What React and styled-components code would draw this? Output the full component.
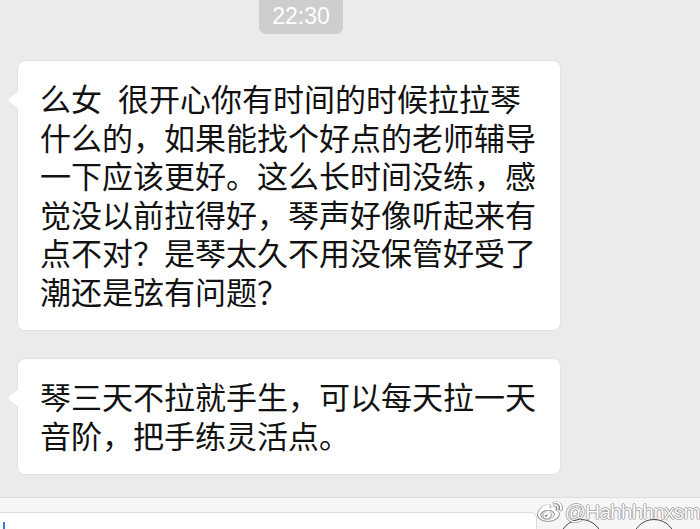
import styled, { createGlobalStyle } from "styled-components"
import { FaWeibo } from "react-icons/fa"

const Global = createGlobalStyle`
    html, body {
        margin: 0;
        padding: 0;
        height: 529px;
        overflow: hidden;
        background: #ebebeb;
    }
    #root {
        height: 529px;
    }
`

const Screen = styled.div`
    position: relative;
    display: flex;
    flex-direction: column;
    height: 529px;
    width: 700px;
    background: #ebebeb;
    font-family: "Noto Sans CJK SC", "Noto Sans", sans-serif;
    overflow: hidden;
`
const Stamp = styled.div`
    align-self: flex-start;
    margin-left: 259px;
    width: 84px;
    height: 34px;
    border-radius: 0 0 7px 7px;
    background: #cecece;
    color: #ffffff;
    font-family: "Liberation Sans", Arial, sans-serif;
    font-size: 23px;
    line-height: 32px;
    text-align: center;
`
const Messages = styled.div`
    display: flex;
    flex-direction: column;
    gap: 29px;
    padding: 27px 0 0 18px;
    flex: 1;
`
const Bubble = styled.div`
    position: relative;
    width: 542px;
    box-sizing: border-box;
    padding: 18px 22px 20px;
    background: #ffffff;
    border-radius: 7px;
    box-shadow: 0 0 0 0.5px rgba(0, 0, 0, 0.07);
    color: #121212;
    font-size: 31px;
    line-height: 38.5px;
    &::before {
        content: "";
        position: absolute;
        left: -10px;
        top: 30px;
        width: 11px;
        height: 18px;
        background: #ffffff;
        clip-path: polygon(100% 0, 5% 45%, 5% 55%, 100% 100%);
    }
`
const Line = styled.div`
    white-space: nowrap;
`
const Gap = styled.span`
    display: inline-block;
    width: ${({ w }) => w}px;
`
const Bar = styled.div`
    display: flex;
    align-items: flex-start;
    gap: 22px;
    height: 32px;
    border-top: 1px solid #dedede;
    background: #f6f6f7;
    padding-top: 14px;
    box-sizing: border-box;
`
const Input = styled.div`
    position: relative;
    margin-left: -12px;
    width: 547px;
    height: 40px;
    background: #ffffff;
    border: 1px solid #dcdcdc;
    border-radius: 6px;
`
const Caret = styled.div`
    position: absolute;
    left: 14px;
    top: 9px;
    width: 2px;
    height: 22px;
    background: #3f73e8;
`
const Buttons = styled.div`
    display: flex;
    gap: 29px;
    margin-top: 7px;
`
const Round = styled.div`
    width: 42px;
    height: 42px;
    border-radius: 50%;
    border: 1.6px solid #4a4a4a;
`
const Mark = styled.div`
    position: absolute;
    right: 0;
    top: 500px;
    display: flex;
    align-items: center;
    gap: 3px;
    color: #ffffff;
    font-family: "Liberation Sans", Arial, sans-serif;
    font-size: 20.5px;
    letter-spacing: -0.6px;
    text-shadow: 1px 0 0 rgba(0, 0, 0, 0.28), -1px 0 0 rgba(0, 0, 0, 0.28),
        0 1px 0 rgba(0, 0, 0, 0.28), 0 -1px 0 rgba(0, 0, 0, 0.28);
    svg {
        filter: drop-shadow(1px 0 0 rgba(0, 0, 0, 0.3)) drop-shadow(-1px 0 0 rgba(0, 0, 0, 0.3))
            drop-shadow(0 1px 0 rgba(0, 0, 0, 0.3));
    }
`

const first = [
    "什么的，如果能找个好点的老师辅导",
    "一下应该更好。这么长时间没练，感",
    "觉没以前拉得好，琴声好像听起来有",
    "点不对？是琴太久不用没保管好受了",
    "潮还是弦有问题？",
]
const second = [
    "琴三天不拉就手生，可以每天拉一天",
    "音阶，把手练灵活点。",
]

const App = () => {
    return (
        <Screen>
            <Global />
            <Stamp>22:30</Stamp>
            <Messages>
                <Bubble>
                    <Line>么女<Gap w={16} />很开心你有时间的时候拉拉琴</Line>
                    {first.map((t) => (
                        <Line key={t}>{t}</Line>
                    ))}
                </Bubble>
                <Bubble>
                    {second.map((t) => (
                        <Line key={t}>{t}</Line>
                    ))}
                </Bubble>
            </Messages>
            <Bar>
                <Input>
                    <Caret />
                </Input>
                <Buttons>
                    <Round />
                    <Round />
                </Buttons>
            </Bar>
            <Mark>
                <FaWeibo size={24} />
                @Hahhhhnxsm
            </Mark>
        </Screen>
    )
}

export default App
